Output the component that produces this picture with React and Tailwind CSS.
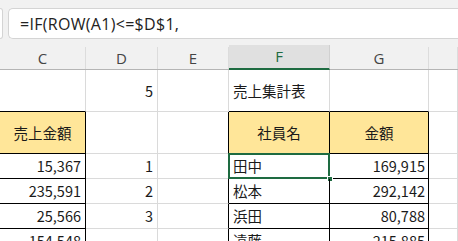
const cols = [
  { id: "C", w: "w-[86px]" },
  { id: "D", w: "w-[72px]" },
  { id: "E", w: "w-[71px]" },
  { id: "F", w: "w-[101px]" },
  { id: "G", w: "w-[99px]" },
  { id: "H", w: "w-[29px]" },
];

const rows = [
  ["15,367", "1", "田中", "169,915"],
  ["235,591", "2", "松本", "292,142"],
  ["25,566", "3", "浜田", "80,788"],
  ["154,548", "", "遠藤", "215,885"],
];

const grid = "border-r border-b border-[#dadada]";

function Cell({ w, className = "", children }) {
  return <div className={`${w} shrink-0 flex items-center ${className}`}>{children}</div>;
}

export default function App() {
  return (
    <div
      className="w-[458px] h-[241px] overflow-hidden bg-white text-[#1a1a1a]"
      style={{ fontFamily: '"Noto Sans CJK JP", "Noto Sans", sans-serif' }}
    >
      {/* formula bar */}
      <div className="bg-[#f1f1f1] pt-[8px] pb-[8px] flex gap-[5px]">
        <div className="w-[3px] h-[31px] bg-white border-y border-r border-[#d4d4d4] rounded-r-[4px]" />
        <div className="flex-1 h-[31px] bg-white border-y border-l border-[#d4d4d4] rounded-l-[5px] flex items-center pl-[11px]">
          <span className="text-[16px] tracking-[0.3px] text-[#222]" style={{ fontFamily: '"Open Sans", sans-serif' }}>
            =IF(ROW(A1)&lt;=$D$1,
          </span>
        </div>
      </div>

      {/* column headers */}
      <div className="flex h-[23px] bg-[#f1f1f1] border-b border-[#b5b5b5]" style={{ fontFamily: '"Open Sans", sans-serif' }}>
        {cols.map((c) =>
          c.id === "F" ? (
            <Cell key={c.id} w={c.w} className="justify-center bg-[#e0e0e0] border-r border-[#d0d0d0] border-b-2 border-b-[#1e6b41] text-[#1e6b41] text-[15px] -mt-[2px] h-[25px]">
              {c.id}
            </Cell>
          ) : (
            <Cell key={c.id} w={c.w} className="justify-center border-r border-[#dcdcdc] text-[15px] text-[#444]">
              {c.id === "H" ? "" : c.id}
            </Cell>
          )
        )}
      </div>

      {/* row 1 */}
      <div className="flex h-[42px] text-[14.5px]">
        <Cell w="w-[86px]" className="border-r border-[#dadada] border-b border-b-black" />
        <Cell w="w-[72px]" className={`${grid} justify-end pr-[4px]`}>5</Cell>
        <Cell w="w-[71px]" className={grid} />
        <Cell w="w-[101px]" className="border-r border-[#dadada] border-b border-b-black pl-[4px]">売上集計表</Cell>
        <Cell w="w-[99px]" className="border-r border-[#dadada] border-b border-b-black" />
        <Cell w="w-[29px]" className={grid} />
      </div>

      {/* row 2: table headers */}
      <div className="flex h-[42px] text-[14.5px]">
        <Cell w="w-[86px]" className="bg-[#ffe699] border-r border-b border-black justify-center">売上金額</Cell>
        <Cell w="w-[72px]" className={grid} />
        <Cell w="w-[71px]" className="border-r border-r-black border-b border-[#dadada]" />
        <Cell w="w-[101px]" className="bg-[#ffe699] border-r border-b border-black justify-center">社員名</Cell>
        <Cell w="w-[99px]" className="bg-[#ffe699] border-r border-b border-black justify-center">金額</Cell>
        <Cell w="w-[29px]" className={grid} />
      </div>

      {/* data rows */}
      {rows.map((r, i) => (
        <div key={i} className="flex h-[25px] text-[14.5px]">
          <Cell w="w-[86px]" className="border-r border-b border-black justify-end pr-[4px]">{r[0]}</Cell>
          <Cell w="w-[72px]" className={`${grid} justify-end pr-[4px]`}>{r[1]}</Cell>
          <Cell w="w-[71px]" className="border-r border-r-black border-b border-[#dadada]" />
          <Cell w="w-[101px]" className="relative border-r border-b border-black pl-[4px]">
            {r[2]}
            {i === 0 && (
              <>
                <div className="absolute -left-[1px] -top-[1px] w-[102px] h-[26px] border-2 border-[#1e6b41]" />
                <div className="absolute -right-[4px] -bottom-[4px] w-[6px] h-[6px] bg-[#1e6b41] border border-white" />
              </>
            )}
          </Cell>
          <Cell w="w-[99px]" className="border-r border-b border-black justify-end pr-[3px]">{r[3]}</Cell>
          <Cell w="w-[29px]" className={grid} />
        </div>
      ))}
    </div>
  );
}
